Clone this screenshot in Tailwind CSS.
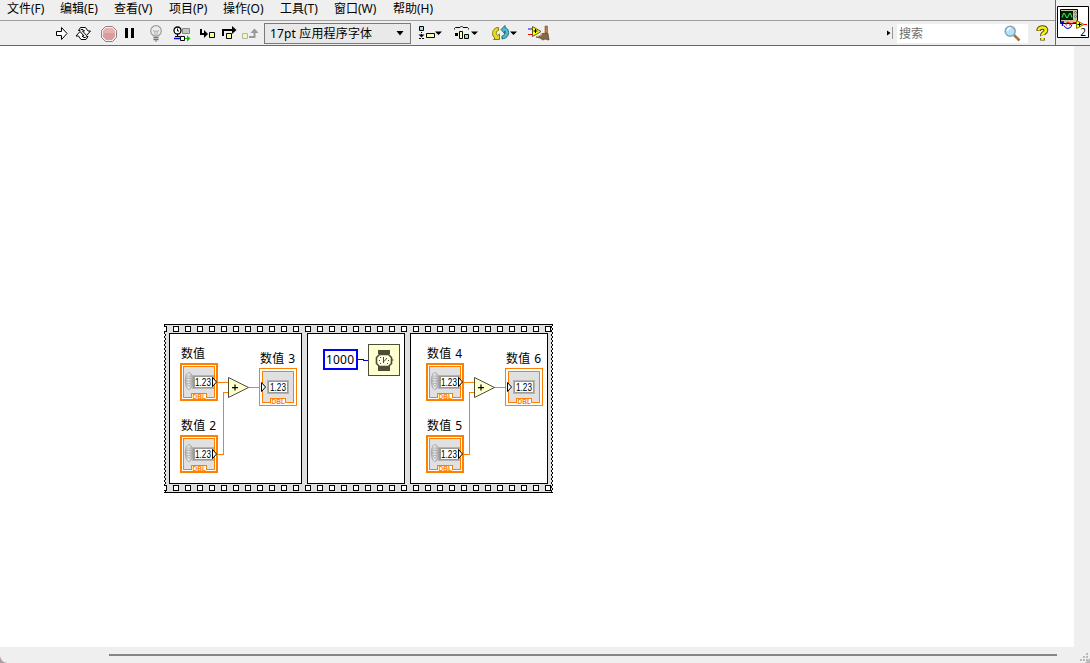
<!DOCTYPE html>
<html lang="zh-CN">
<head>
<meta charset="utf-8">
<title>LabVIEW</title>
<script src="https://cdn.jsdelivr.net/npm/@tailwindcss/browser@4"></script>
</head>
<body class="w-[1090px] h-[663px] overflow-hidden flex flex-col bg-[#efefef] text-black text-[12px] font-['Noto_Sans','Noto_Sans_CJK_SC',sans-serif]">

<svg width="0" height="0" class="absolute">
  <defs>
    <linearGradient id="knob"><stop offset="0" stop-color="#a4a4a4"/><stop offset=".4" stop-color="#ececec"/><stop offset="1" stop-color="#a6a6a6"/></linearGradient>
    <pattern id="holes" width="12" height="6" patternUnits="userSpaceOnUse" x="9">
      <rect x=".5" y=".5" width="5" height="5" fill="#fff" stroke="#000"/>
    </pattern>
    <pattern id="edge" width="2" height="4" patternUnits="userSpaceOnUse">
      <rect width="1" height="4" fill="#fff"/>
      <path d="M0 0h1v2H0zM1 2h1v2H1z" fill="#000"/>
      <path d="M1 0h1v2H1z" fill="#e0e0e0"/>
    </pattern>
    <g id="control" shape-rendering="crispEdges">
      <rect width="38" height="38" fill="#ff8000"/>
      <rect x="2" y="2" width="34" height="34" fill="#fff"/>
      <rect x="3.500" y="3.500" width="31" height="31" fill="#e0e0e0" stroke="#ff8000"/>
      <rect x="12" y="12" width="22" height="14" fill="#b4b4b4"/>
      <rect x="13" y="13" width="20" height="12" fill="#9a9a9a"/>
      <rect x="15" y="14" width="17" height="10" fill="#fff"/>
      <g shape-rendering="auto"><ellipse cx="9" cy="18" rx="3.800" ry="8.500" fill="url(#knob)" stroke="#a4a4a4" stroke-width=".8"/>
      <path d="M7 15.500l2-3 2 3zM7 20.500l2 3 2-3z" fill="#e8e8e8" stroke="#909090" stroke-width=".5"/><path d="M5.500 18h7" stroke="#999" stroke-width=".6"/></g>
      <path d="M32.500 14.500v9l4-4.500z" fill="#fff" stroke="#000" shape-rendering="auto"/>
      <path d="M11 36v-6h16v6z" fill="#fff"/><path d="M11.500 35v-4.500h15V35" stroke="#ff8000"/>
    </g>
    <g id="indicator" shape-rendering="crispEdges">
      <rect x=".5" y=".5" width="37" height="37" fill="#fff" stroke="#ff8000"/>
      <rect x="3.500" y="3.500" width="31" height="31" fill="#e0e0e0" stroke="#ff8000"/>
      <rect x="8" y="12" width="22" height="14" fill="#b4b4b4"/>
      <rect x="9" y="13" width="20" height="12" fill="#9a9a9a"/>
      <rect x="10" y="14" width="18" height="10" fill="#fff"/>
      <path d="M2.500 14.500v9l4-4.500z" fill="#fff" stroke="#000" shape-rendering="auto"/>
      <path d="M11 36v-6h16v6z" fill="#fff"/><path d="M11.500 35v-4.500h15V35" stroke="#ff8000"/>
    </g>
    <g id="add">
      <path d="M.5.500v20l20-10z" fill="#ffffcf" stroke="#4d4d38"/>
      <path d="M4 10h6v1.200H4zM6.400 7.500h1.200v6H6.400z" fill="#000"/>
    </g>
  </defs>
</svg>

<header class="h-[46px] flex shrink-0">
  <div class="w-[1055px] flex flex-col">
    <nav class="h-5 flex items-center pl-[7px] pb-[2px] leading-none">
      <span class="w-[53px]">文件(F)</span><span class="w-[54px]">编辑(E)</span><span class="w-[55px]">查看(V)</span><span class="w-[54px]">项目(P)</span><span class="w-[57px]">操作(O)</span><span class="w-[54px]">工具(T)</span><span class="w-[59px]">窗口(W)</span><span>帮助(H)</span>
    </nav>
    <div class="h-[26px] flex items-center border-t border-t-[#a0a0a0] border-b border-b-[#696969]">
      <svg class="shrink-0" width="264" height="24" viewBox="0 21 264 24" fill="none">
        <path d="M56.500 31.500h5v-4l5.500 6-5.500 6v-4h-5z" fill="#fff" stroke="#000"/>
        <g stroke="#000" fill="#fff"><path d="M78.500 30.500l2-3h5l2.500 3.500h2.500l-4 4.500-4-4.500h2l-1.500-1.500h-2l-1 1z"/><path d="M88 36.500l-2 3h-5l-2.500-3.500H76l4-4.500 4 4.500h-2l1.500 1.500h2l1-1z"/></g>
        <path d="M105.500 26.500h7l4 4v7l-4 4h-7l-4-4v-7z" fill="#f4eeee" stroke="#8c8080"/><path d="M106 28h6l3 3v6l-3 3h-6l-3-3v-6z" fill="#dd9c9c"/><path d="M106 28h6l3 3v2h-12v-2z" fill="#e4b0b0"/>
        <path d="M125 28h3v10h-3zM131 28h3v10h-3z" fill="#000"/>
        <circle cx="156" cy="31" r="5.300" fill="#ececec" stroke="#9b9b9b" stroke-width="1.200"/><path d="M153.500 30l1 2.500 1.500-2 1.500 2 1-2.500M155 32.500v4M157 32.500v4" stroke="#aaa"/><path d="M153.500 36.500h5v4h-5z" fill="#bbb"/><path d="M153.500 37.500h5M153.500 39.500h5M155 41h2" stroke="#777"/>
        <circle cx="177.500" cy="30.500" r="3.500" fill="#fff" stroke="#000" stroke-width="1.300"/><path d="M177.500 28.500v2.500h1.500M177.500 34v3M175 36.500h5" stroke="#000"/><path d="M182.500 28.500h7v5h-7z" fill="#c4c4c4" stroke="#888"/><path d="M174 38.500h6" stroke="#0000ff" stroke-width="1.500"/><path d="M180.500 36.500h4v4h-4z" fill="#fff" stroke="#000"/><path d="M185 38h2v-2.500l3.500 3-3.500 3V39h-2z" fill="#00c000"/>
        <path d="M201 29v5h4" stroke="#000" stroke-width="2"/><path d="M204 30v8l4-4z" fill="#000"/><path d="M209.500 32.500h5v5h-5z" fill="#ffff98" stroke="#000"/>
        <path d="M223 36v-6h9" stroke="#000" stroke-width="2"/><path d="M232 26v8l4.500-4z" fill="#000"/><path d="M226.500 33.500h5v5h-5z" fill="#ffff98" stroke="#000"/>
        <path d="M242.500 33.500h5v5h-5z" fill="#f5f5bb" stroke="#b5b5a0"/><path d="M249 37h5.500V32" stroke="#999" stroke-width="2"/><path d="M250.500 33l4-4.500 4 4.500z" fill="#999"/>
      </svg>
      <div class="w-[147px] h-[21px] shrink-0 border border-[#7a7a7a] bg-[#e9e9e9] flex items-center justify-between pl-[5px] pr-[6px] leading-none"><span class="pt-[2px] tracking-[0.15px]">17pt 应用程序字体</span><svg width="8" height="5"><path d="M.5 0h7L4 4.500z"/></svg></div>
      <svg class="shrink-0" width="145" height="24" viewBox="411 21 145 24" fill="none">
        <path d="M419.500 26.500h4v4h-4z" fill="#91dfef" stroke="#000"/><path d="M421.500 32v1M421.500 34v2M419 38.500h2M422 38.500h2" stroke="#000"/><path d="M418.500 34.500h6l-3 3z" fill="#000"/><path d="M426.500 33.500h8v4h-8z" fill="#ffffb0" stroke="#000"/>
        <path d="M435 31.500h7l-3.500 3.500zM471 31.500h7l-3.500 3.500zM510 31.500h7l-3.500 3.500z" fill="#000"/>
        <path d="M454.500 29.500v-1l1-1h4.500l1.500-1.500 1.500 1.500h4.500l1 1v1" stroke="#000"/><path d="M455 33h3v3h-3z" fill="#000"/><path d="M459.500 31.500h3v7h-3z" fill="#ffffb0" stroke="#000"/><path d="M464.500 34.500h4v4h-4z" fill="#91dfef" stroke="#000"/>
        <path d="M498.500 27.500c-4 0-6 3-6 6 0 2 1 3.500 2.500 4.500l-1.500 1.500h6v-5.500l-2 1.500c-2.500-2.500-.5-5 1-5z" fill="#e6da20" stroke="#7a6e10" stroke-width=".9"/><path d="M501 29.500l4-4v2c4.500 1 5 8 .5 10.500l-3.500 1v-3c3.500-1 3.500-4 2.500-5v2.500z" fill="#4bbccb" stroke="#1c6072" stroke-width=".9"/>
        <path d="M528 29h5" stroke="#00f"/><path d="M528 34.500h4" stroke="#f00"/><path d="M532.500 26.500v10l8.500-5z" fill="#ff0" stroke="#605b20"/><path d="M533.500 31h4M535.500 29v4" stroke="#000"/><path d="M545 26h2.500v7H545z" fill="#bb833d" stroke="#71502b" stroke-width=".6"/><path d="M542 33.500h6l1 6.500-4-1-2 1-3-2-4-1c3 0 5-2 6-3.500z" fill="#8b6743" stroke="#52402e" stroke-width=".7"/><path d="M537 36.500l5-2" stroke="#dcc080"/>
      </svg>
      <div class="ml-auto flex items-center h-full">
        <svg width="8" height="14" class="mr-[2px]"><path d="M0 4.500v5L3.500 7z"/><path d="M5.500 1v12" stroke="#999"/></svg>
        <div class="w-[131px] h-[19px] bg-white flex items-center justify-between pl-[2px] pr-[7px] text-[#6d6d6d] leading-none"><span class="pt-[2px]">搜索</span>
          <svg width="17" height="17" viewBox="0 0 17 17"><path d="M10 10l5.500 5.500" stroke="#a8703f" stroke-width="2.600"/><circle cx="6.200" cy="6.200" r="5" fill="#b5e2fb" stroke="#8aa2b8" stroke-width="1.500"/><path d="M3.500 6a3 3 0 013-3" stroke="#fff" stroke-width="1.500" fill="none"/></svg>
        </div>
        <svg class="ml-[8px] mr-[6px]" width="13" height="17" viewBox="0 0 13 17" fill="none"><path d="M2.800 6V4.500Q3.500 2.500 6.500 2.500T10 5Q10 6.500 8 8T6.500 10.500M6.500 13v2.500" stroke="#4d4d08" stroke-width="4.600"/><path d="M2.800 5.500V4.500Q3.500 2.500 6.500 2.500T10 5Q10 6.500 8 8T6.500 10.500M6.500 13v2" stroke="#ffee10" stroke-width="2.700"/></svg>
      </div>
    </div>
  </div>
  <div class="w-[35px] border-l border-l-[#696969] border-b border-b-[#696969] pt-[6px] pl-px">
    <svg width="32" height="32" viewBox="0 0 32 32" fill="none"><path d="M.5.500h31v31H.5z" fill="#fff" stroke="#000"/><path d="M3.500 3.500h17v14h-17z" fill="#c9c5a5" stroke="#000"/><path d="M4 5h12v9H4z" fill="#002000"/><path d="M5 11.500l1.500-4h1l2 4h1l2-4h1l1.500 4" stroke="#28d850" stroke-width="1.200"/><circle cx="18.500" cy="6.500" r="1" stroke="#555" stroke-width=".7"/><circle cx="18.500" cy="10.500" r="1" stroke="#555" stroke-width=".7"/><path d="M3 16h4M5.500 16v4" stroke="#0000b0" stroke-width="1.300"/><path d="M7 19.500q1 3 4 3t4-4" stroke="#0000b0"/><path d="M9.500 19.500a2 2 0 113 0M13 18.500l4-2h4M27 18.500h3" stroke="#f00"/><path d="M19.500 14.500v8l7.500-4z" fill="#ff0" stroke="#817600"/><path d="M20.500 18.500h4M22.500 16.500v4" stroke="#000"/><text x="23.300" y="29.500" font-size="10" font-family="Noto Sans" fill="#000">2</text></svg>
  </div>
</header>

<main class="flex h-[601px] shrink-0">
  <div class="relative w-[1074px] h-full bg-white">
    <section class="absolute left-[164px] top-[278px] w-[389px] h-[169px] flex flex-col bg-[#e0e0e0] border-y border-black">
      <svg class="shrink-0" width="389" height="8"></svg>
      <div class="flex h-[151px] gap-[5px] pl-[5px]">
        <div class="w-[133px] border border-black bg-white"></div>
        <div class="w-[98px] border border-black bg-white"></div>
        <div class="w-[138px] border border-black bg-white"></div>
      </div>
    </section>
    <svg class="absolute left-[164px] top-[278px]" width="390" height="169"><rect y="1" width="2" height="167" fill="url(#edge)"/><g transform="translate(389 0) scale(-1 1)"><rect y="1" width="2" height="167" fill="url(#edge)"/></g><g transform="translate(0 2)"><rect width="387" height="6" fill="url(#holes)"/></g><g transform="translate(0 161)"><rect width="387" height="6" fill="url(#holes)"/></g></svg>

    <svg class="absolute left-[164px] top-[278px]" width="389" height="169" viewBox="164 324 389 169" fill="none" font-family="'Noto Sans','Noto Sans CJK SC',sans-serif" font-size="12">
      <g stroke="#ff8000" shape-rendering="crispEdges">
        <path d="M217 382.500h11M217 454.500h6.500v-62h5M248 387.500h12"/>
        <path d="M463 382.500h11M463 454.500h6.500v-62h5M494 387.500h12"/>
      </g>
      <use href="#control" x="180" y="363"/><use href="#control" x="180" y="435"/><use href="#indicator" x="259" y="368"/><use href="#add" x="228" y="377"/>
      <use href="#control" x="426" y="363"/><use href="#control" x="426" y="435"/><use href="#indicator" x="505" y="368"/><use href="#add" x="474" y="377"/>
      <g fill="#000">
        <text x="181" y="358">数值</text><text x="181" y="430" textLength="35">数值 2</text><text x="260" y="363" textLength="35">数值 3</text>
        <text x="427" y="358" textLength="35">数值 4</text><text x="427" y="430" textLength="35">数值 5</text><text x="506" y="363" textLength="35">数值 6</text>
      </g>
      <g fill="#000" font-family="Liberation Sans" font-size="11">
        <text x="195" y="386" textLength="16" lengthAdjust="spacingAndGlyphs">1.23</text><text x="195" y="458" textLength="16" lengthAdjust="spacingAndGlyphs">1.23</text><text x="270" y="391" textLength="16" lengthAdjust="spacingAndGlyphs">1.23</text>
        <text x="441" y="386" textLength="16" lengthAdjust="spacingAndGlyphs">1.23</text><text x="441" y="458" textLength="16" lengthAdjust="spacingAndGlyphs">1.23</text><text x="516" y="391" textLength="16" lengthAdjust="spacingAndGlyphs">1.23</text>
      </g>
      <g fill="#ff8000" font-family="Liberation Sans" font-size="7" font-weight="bold">
        <text x="192.500" y="399" textLength="13.500" lengthAdjust="spacingAndGlyphs">DBL</text><text x="192.500" y="471" textLength="13.500" lengthAdjust="spacingAndGlyphs">DBL</text><text x="271.500" y="404" textLength="13.500" lengthAdjust="spacingAndGlyphs">DBL</text>
        <text x="438.500" y="399" textLength="13.500" lengthAdjust="spacingAndGlyphs">DBL</text><text x="438.500" y="471" textLength="13.500" lengthAdjust="spacingAndGlyphs">DBL</text><text x="517.500" y="404" textLength="13.500" lengthAdjust="spacingAndGlyphs">DBL</text>
      </g>
      <rect x="324" y="350" width="33" height="19" fill="#fff" stroke="#0000ff" stroke-width="2"/>
      <text x="326" y="364" fill="#000" textLength="28">1000</text>
      <path d="M358 359.500h5.500v1h5" stroke="#0000d0" shape-rendering="crispEdges"/>
      <rect x="368.500" y="344.500" width="31" height="31" fill="#ffffcf" stroke="#4d4d38"/>
      <path d="M378 350h12v4h-12zM378 366h12v5h-12z" fill="#4d4d38"/><path d="M379.500 354.500h9l3 3v6l-3 3h-9l-3-3v-6z" fill="#ffffe4" stroke="#4d4d38" stroke-width="1.600"/><path d="M383.500 357v6M384 361.500l3-3.500M379 360.500h1M388 360.500h1M380 357.500h1M380 363.500h1M387 363.500h1M392 360h1.500" stroke="#4d4d38"/>
    </svg>
  </div>
</main>

<footer class="relative h-4 flex items-start">
  <div class="ml-[109px] mt-[7px] w-[948px] h-[2px] bg-[#858585]"></div>
  <svg class="absolute left-0 bottom-0" width="7" height="8"><path d="M0 1q1 6 7 7H0z" fill="#a99fa4"/></svg>
  <svg class="absolute right-0 bottom-0" width="10" height="10" fill="#b9b9b9"><path d="M6 0h2v2H6zM3 3h2v2H3zM6 3h2v2H6zM0 6h2v2H0zM3 6h2v2H3zM6 6h2v2H6z"/><path d="M10 5v5H5z"/></svg>
</footer>
</body>
</html>
